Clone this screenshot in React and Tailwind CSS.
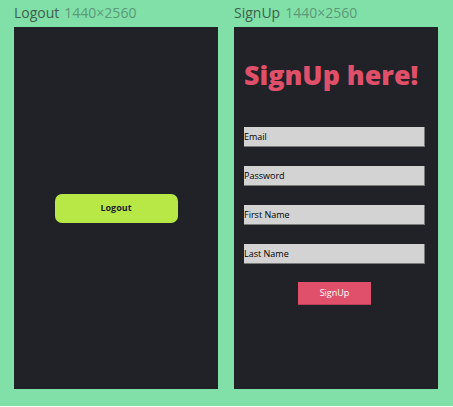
import React from 'react';

const Field = ({ label }) => (
  <div className="w-[181px] h-[20px] bg-[#d3d3d3] border-r border-b border-[#7a7a7a] flex items-center text-[9px] text-black leading-none">
    {label}
  </div>
);

const Frame = ({ title, children }) => (
  <div className="flex flex-col w-[204px]">
    <div className="h-[27px] flex items-start pt-[3px] text-[14px] leading-[20px] whitespace-nowrap">
      <span className="text-[#3e5f4b]">{title}</span>
      <span className="ml-[5px] text-[#5c9a77]">1440×2560</span>
    </div>
    <div className="h-[362px] bg-[#212228] relative">{children}</div>
  </div>
);

export default function App() {
  return (
    <div
      className="w-[453px] h-[407px] bg-[#80e0a8] border-t border-[#8ee8b4] flex gap-[16px] pl-[14px] -mt-px"
      style={{ fontFamily: '"Open Sans", "Noto Sans", sans-serif' }}
    >
      <Frame title="Logout">
        <div className="h-full flex items-center justify-center">
          <button className="w-[123px] h-[29px] rounded-[7px] bg-[#b8e845] text-[#1e1e2a] text-[9px] font-bold">
            Logout
          </button>
        </div>
      </Frame>
      <Frame title="SignUp">
        <div className="flex flex-col pl-[10px]">
          <h1 className="mt-[30px] text-[#e0506a] text-[26.8px] font-extrabold leading-[36px]">
            SignUp here!
          </h1>
          <div className="mt-[34px] flex flex-col gap-[19px]">
            <Field label="Email" />
            <Field label="Password" />
            <Field label="First Name" />
            <Field label="Last Name" />
          </div>
          <div className="w-[181px] flex justify-center mt-[18px]">
            <button className="w-[73px] h-[23px] bg-[#e0506a] text-white text-[9px] border-b border-[#b8405a]">
              SignUp
            </button>
          </div>
        </div>
      </Frame>
    </div>
  );
}
